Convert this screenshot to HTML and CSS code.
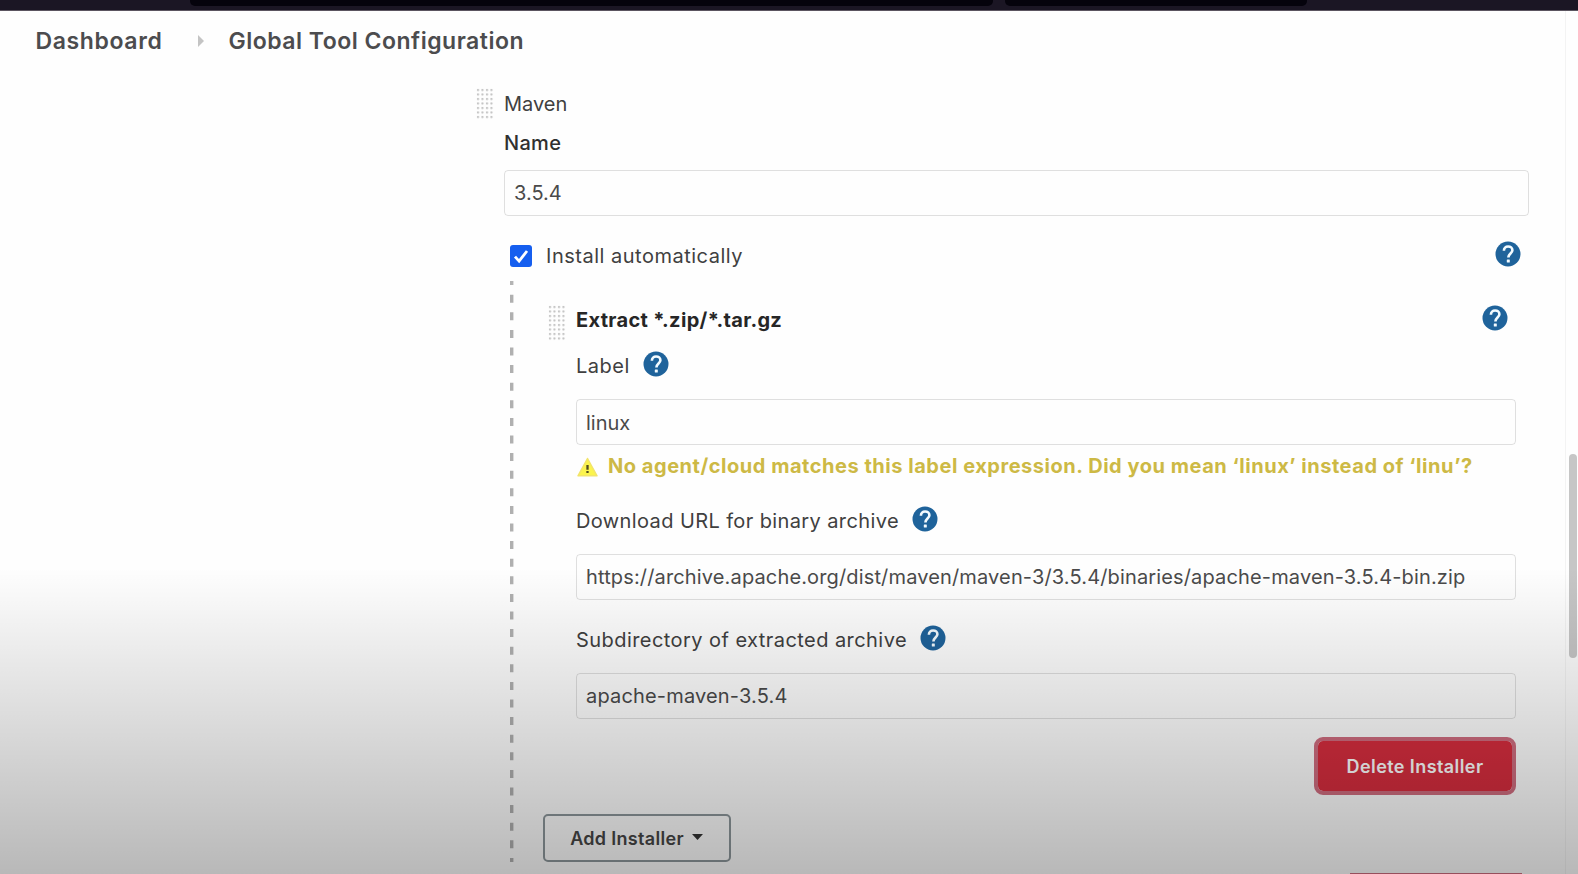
FILE: index.html
```html
<!DOCTYPE html>
<html lang="en">
<head>
<meta charset="utf-8">
<title>Global Tool Configuration</title>
<link rel="stylesheet" href="styles.css">
</head>
<body>
<svg class="defs" width="0" height="0" aria-hidden="true">
  <symbol id="help" viewBox="0 0 26 26">
    <circle cx="13" cy="13" r="12.5" fill="#1f639b"/>
    <path d="M8.9 9.7C8.9 7 10.7 5.5 13.1 5.5c2.5 0 4.3 1.5 4.3 3.7 0 3.1-4 3.5-4 7.2" fill="none" stroke="#f3fbff" stroke-width="2.6"/>
    <rect x="11.8" y="18.6" width="3" height="2.9" rx=".5" fill="#f3fbff"/>
  </symbol>
</svg>
<div class="browser-bar"><span class="tab tab-main"></span><span class="tab tab-side"></span></div>
<nav class="breadcrumb">
  <span class="crumb crumb-home">Dashboard</span>
  <svg class="crumb-arrow" viewBox="0 0 6 12"><path d="M0 0L6 6L0 12z" fill="#c4c4c4"/></svg>
  <span class="crumb crumb-page">Global Tool Configuration</span>
</nav>
<main class="tool">
  <div class="row maven-row"><span class="grip"></span><span class="t-maven">Maven</span></div>
  <div class="row name-row"><span class="t-name">Name</span></div>
  <div class="field name-field"><span class="t-version">3.5.4</span></div>
  <div class="row install-row">
    <svg class="checkbox" viewBox="0 0 22 22"><rect width="22" height="22" rx="3" fill="#155eef"/><path d="M5 11.6l4.1 4.5L17 6" fill="none" stroke="#fff" stroke-width="2.8"/></svg>
    <span class="t-install">Install automatically</span>
    <svg class="help push"><use href="#help"/></svg>
  </div>
  <section class="installers">
    <svg class="rail" viewBox="0 0 4 582"><rect y="1" width="3.4" height="4" fill="#b4b4b4"/><path d="M1.7 14.7V574" stroke="#b0b0b0" stroke-width="3.4" stroke-dasharray="8 9.6"/><rect y="578" width="3.4" height="4" fill="#b0b0b0"/></svg>
    <div class="installer">
      <div class="row extract-row"><span class="grip grip-tall"></span><b class="t-extract">Extract *.zip/*.tar.gz</b><svg class="help push"><use href="#help"/></svg></div>
      <div class="row label-row"><span class="t-label">Label</span><svg class="help"><use href="#help"/></svg></div>
      <div class="field"><span class="t-linux">linux</span></div>
      <div class="row warning-row">
        <svg class="warning-icon" viewBox="0 0 21 20"><path d="M10.5 1.5L20 18.8H1z" fill="#fbf44c" stroke="#f2e46a" stroke-width="1.5" stroke-linejoin="round"/><path d="M10.5 8v4.7M10.5 14v2" stroke="#4f4b20" stroke-width="2.3"/></svg>
        <b class="t-warning">No agent/cloud matches this label expression. Did you mean ‘linux’ instead of ‘linu’?</b>
      </div>
      <div class="row url-row"><span class="t-url-label">Download URL for binary archive</span><svg class="help"><use href="#help"/></svg></div>
      <div class="field"><span class="t-url">https://archive.apache.org/dist/maven/maven-3/3.5.4/binaries/apache-maven-3.5.4-bin.zip</span></div>
      <div class="row sub-row"><span class="t-sub-label">Subdirectory of extracted archive</span><svg class="help"><use href="#help"/></svg></div>
      <div class="field"><span class="t-sub">apache-maven-3.5.4</span></div>
      <div class="actions"><button class="delete"><span class="t-delete">Delete Installer</span></button></div>
      <button class="add"><span class="t-add">Add Installer</span><svg class="caret" viewBox="0 0 11 6"><path d="M0 0h11L5.5 6z" fill="#333"/></svg></button>
    </div>
  </section>
</main>
<div class="next-button"></div>
<div class="scrollbar"><div class="thumb"></div></div>
<div class="shade"></div>
</body>
</html>
```
FILE: styles.css
```css
* { box-sizing: border-box; }
body {
  margin: 0; width: 1578px; height: 874px; overflow: hidden; position: relative;
  background: #fefefe; color: #404040;
  font: 20px/30px Inter, "Liberation Sans", sans-serif; white-space: nowrap;
}
svg { display: block; flex: none; }
.defs { position: absolute; }
.browser-bar {
  height: 11px; padding-left: 190px; display: flex; gap: 12px;
  background: #1b1624; border-bottom: 1px solid #5b5560;
}
.tab { height: 6px; background: #05030c; border-radius: 0 0 5px 5px; }
.tab-main { width: 803px; }
.tab-side { width: 302px; }
.breadcrumb { height: 61px; padding: 0 0 1px 35.5px; display: flex; align-items: center; color: #4c4c4e; font-size: 23px; font-weight: 600; letter-spacing: .5px; }
.crumb-home { width: 162px; letter-spacing: .62px; }
.crumb-arrow { width: 6px; height: 12px; margin-right: 25px; }
.tool { padding: 16px 49px 0 504px; }
.row { display: flex; align-items: center; height: 30px; }
.grip {
  flex: none; width: 18px; height: 31px; margin: 0 10px 0 -28px;
  background: radial-gradient(circle at 2px 2px, #c4c4c4 0 .8px, transparent 1.5px) 0 0 / 4.5px 4.5px;
}
.grip-tall { height: 36px; margin-top: 5px; }
.t-maven { padding-top: 1px; }
.name-row { margin-top: 9px; padding-top: 1px; color: #303030; font-weight: 500; letter-spacing: .3px; }
.field {
  height: 46px; padding: 0 9px; display: flex; align-items: center;
  border: 1px solid rgba(0, 0, 0, .12); border-radius: 4px; color: #4a4a4a;
}
.name-field { margin-top: 13px; }
.install-row { margin-top: 25px; padding-left: 6px; }
.t-install { letter-spacing: .51px; }
.t-extract { letter-spacing: .33px; }
.t-label { letter-spacing: .5px; }
.t-linux { padding-top: 1px; }
.t-warning { letter-spacing: .53px; }
.t-url-label { letter-spacing: .39px; }
.t-url { letter-spacing: .145px; }
.t-sub-label { letter-spacing: .44px; }
.t-sub { letter-spacing: .17px; }
.t-delete { letter-spacing: .42px; }
.t-add { letter-spacing: .31px; }
.checkbox { width: 22px; height: 22px; margin-right: 14px; }
.help { width: 26px; height: 26px; margin: -4px 0 0 13px; }
.push { margin-left: auto; margin-right: 8px; }
.installers { display: flex; padding-left: 6px; margin-top: 9px; }
.rail { width: 4px; height: 582px; }
.installer { flex: 1; padding: 25px 13px 0 62px; }
.extract-row { color: #262626; }
.label-row { margin: 16px 0 18px; }
.warning-row { height: 30px; margin-top: 6px; color: #cdb945; }
.warning-icon { width: 21px; height: 20px; margin: 2px 10px 0 1px; }
.url-row { margin: 25px 0 18px; }
.sub-row { margin: 25px 0 18px; }
button { font: 600 18px/24px Inter, "Liberation Sans", sans-serif; display: flex; align-items: center; justify-content: center; padding: 0; }
.actions { display: flex; justify-content: flex-end; margin-top: 18px; }
.delete { width: 202px; height: 58px; padding-top: 1px; border: 4px solid #cf6d7f; border-radius: 9px; background: #d62d3e; background-clip: padding-box; color: #fff; }
.add { width: 188px; height: 48px; margin: 19px 0 0 -33px; padding: 1px 1px 0 0; border: 2px solid #8d979b; border-radius: 5px; background: transparent; color: #464646; }
.caret { width: 11px; height: 6px; margin: -3px 0 0 8px; }
.next-button { position: absolute; left: 1350px; top: 873px; width: 172px; height: 1px; background: #cf6d7f; }
.scrollbar { position: absolute; top: 11px; right: 0; bottom: 0; width: 13px; padding: 443px 1px 0 3px; border-left: 1px solid #f3f3f3; }
.thumb { height: 204px; border-radius: 4px; background: #c6c6c6; }
.shade { position: absolute; left: 0; right: 0; top: 568px; bottom: 0; background: linear-gradient(transparent, rgba(0, 0, 0, .275)); }
```
